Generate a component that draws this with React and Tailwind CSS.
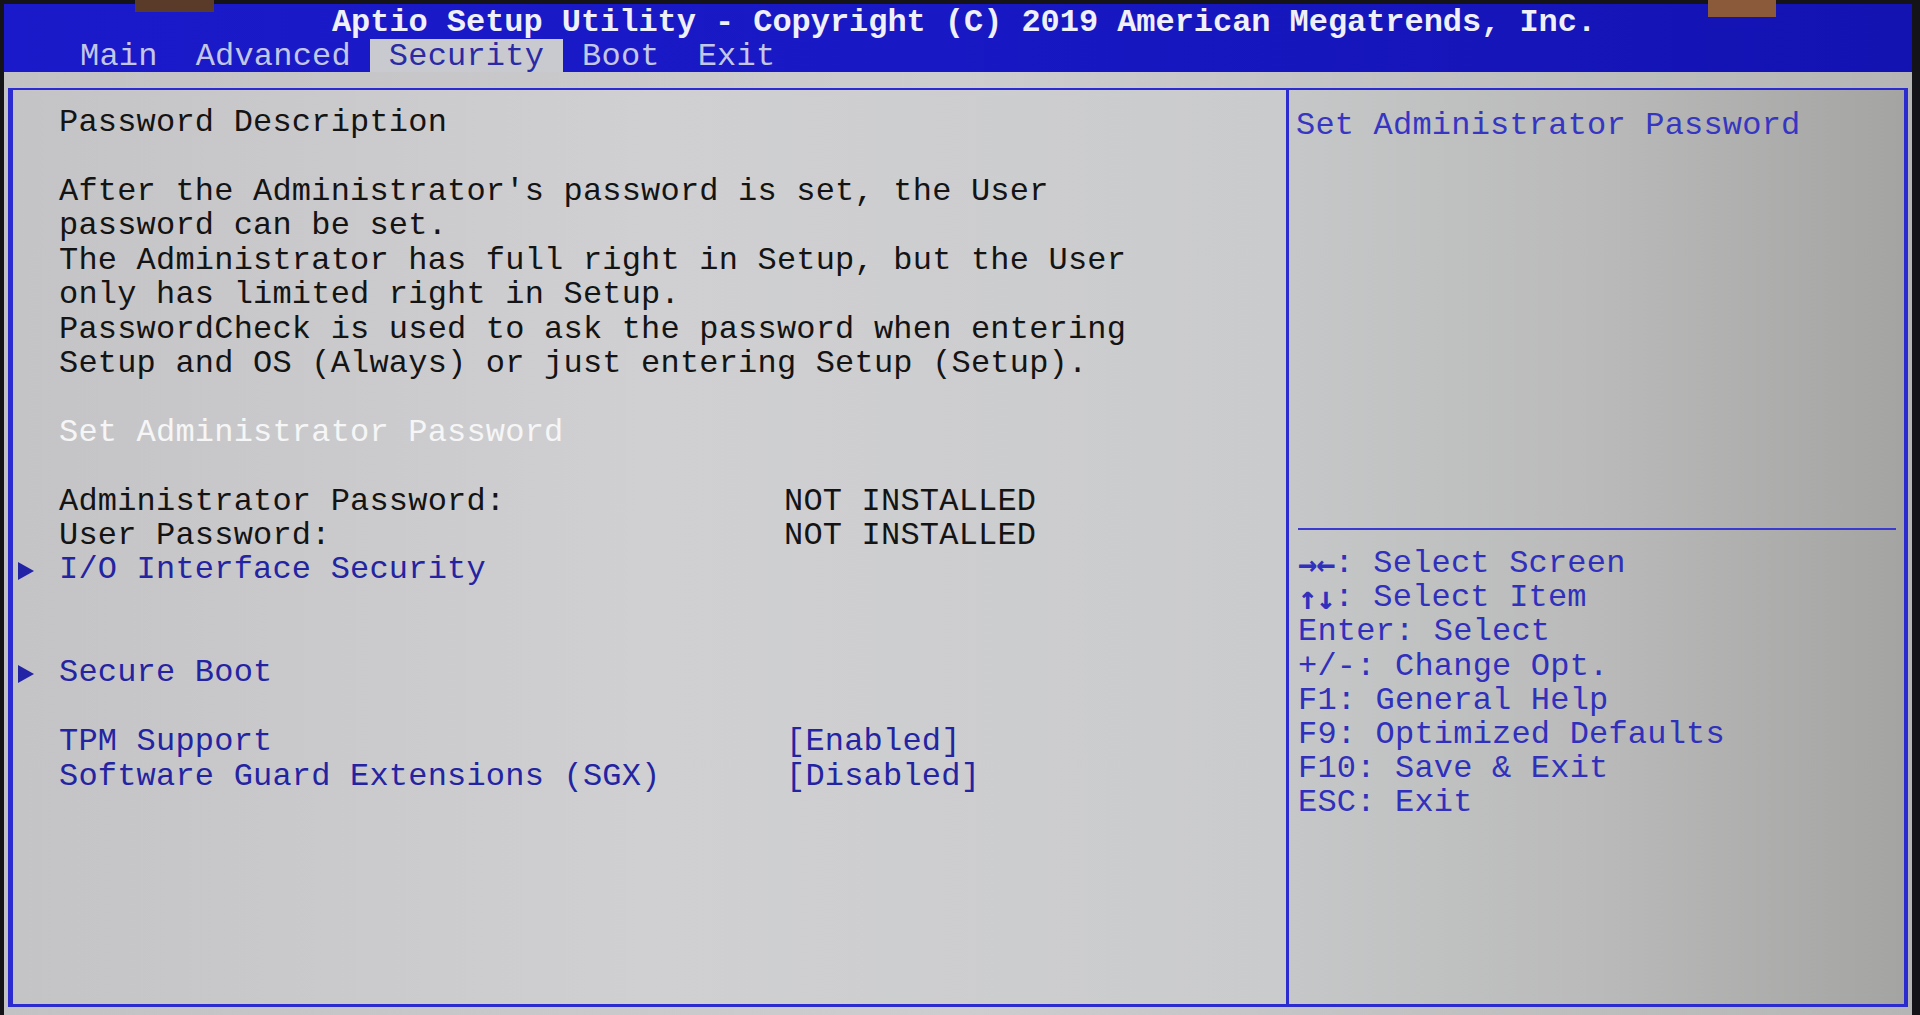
import React from "react";

const FONT = { fontFamily: '"Liberation Mono", "DejaVu Sans Mono", monospace' };

const tabs = ["Main", "Advanced", "Security", "Boot", "Exit"];

const descLines = [
  "After the Administrator's password is set, the User",
  "password can be set.",
  "The Administrator has full right in Setup, but the User",
  "only has limited right in Setup.",
  "PasswordCheck is used to ask the password when entering",
  "Setup and OS (Always) or just entering Setup (Setup).",
];

const helpLines = [
  ["→←", ": Select Screen"],
  ["↑↓", ": Select Item"],
  ["", "Enter: Select"],
  ["", "+/-: Change Opt."],
  ["", "F1: General Help"],
  ["", "F9: Optimized Defaults"],
  ["", "F10: Save & Exit"],
  ["", "ESC: Exit"],
];

const Arrow = () => (
  <svg width="18" height="20" viewBox="0 0 18 20" className="shrink-0">
    <polygon points="1,1 17,10 1,19" fill="#2323a6" />
  </svg>
);

const Row = ({ children, className = "" }) => (
  <div className={`h-[34.4px] flex items-center whitespace-pre ${className}`}>{children}</div>
);

const Blank = () => <div className="h-[34.4px]" />;

const SubMenu = ({ label }) => (
  <Row className="relative text-[#2424a2]">
    <span className="absolute left-[-42px] top-[8px]">
      <Arrow />
    </span>
    {label}
  </Row>
);

const Setting = ({ label, value, labelColor, valueColor, offset = "" }) => (
  <Row>
    <span className={`w-[725px] ${labelColor}`}>{label}</span>
    <span className={`${valueColor} ${offset}`}>{value}</span>
  </Row>
);

export default function App() {
  return (
    <div
      className="relative w-[1920px] h-[1015px] overflow-hidden bg-[#141418] text-[32px] tracking-[0.2px]"
      style={FONT}
    >
      {/* bits of the monitor bezel caught in the photo */}
      <div className="absolute left-[135px] top-0 w-[79px] h-[12px] bg-[#5a3a28] z-10" />
      <div className="absolute left-[1708px] top-0 w-[68px] h-[17px] bg-[#8a5a3a] z-10" />

      <div className="ml-[4px] mr-[8px] mt-[4px] h-[1011px] flex flex-col">
        {/* header */}
        <div className="h-[68px] bg-linear-to-r from-[#1a1aca] via-[#1818c4] to-[#1313b2] flex flex-col">
          <div className="h-[35px] pt-[3px] pl-[12px] flex items-center justify-center text-[#f0f0f8] font-bold tracking-[-0.05px]">
            Aptio Setup Utility - Copyright (C) 2019 American Megatrends, Inc.
          </div>
          <div className="h-[33px] flex items-stretch pl-[57px]">
            {tabs.map((t) => (
              <div
                key={t}
                className={`px-[19px] pt-[2px] flex items-center ${
                  t === "Security" ? "bg-[#c9cacf] text-[#2a2aa6]" : "text-[#c3c7e6]"
                }`}
              >
                {t}
              </div>
            ))}
          </div>
        </div>

        {/* body */}
        <div className="flex-1 flex flex-col bg-linear-to-r from-[#c2c2c5] via-[#cdcdd0] to-[#b4b5b4] pt-[16px] pl-[4px] pr-[4px] pb-[8px]">
          <div className="flex-1 flex border-t-2 border-b-[3px] border-l-[5px] border-r-4 border-[#2b2bd0]">
            {/* left panel */}
            <div className="w-[1273px] pl-[46px] pt-[16px] bg-linear-to-r from-[#c4c4c7] via-[#d0d0d3] to-[#cacbcd]">
              <Row className="text-[#141414]">Password Description</Row>
              <Blank />
              {descLines.map((l) => (
                <Row key={l} className="text-[#141414]">
                  {l}
                </Row>
              ))}
              <Blank />
              <Row className="text-[#f6f6f6]">Set Administrator Password</Row>
              <Blank />
              <Setting
                label="Administrator Password:"
                value="NOT INSTALLED"
                labelColor="text-[#141414]"
                valueColor="text-[#141414]"
              />
              <Setting
                label="User Password:"
                value="NOT INSTALLED"
                labelColor="text-[#141414]"
                valueColor="text-[#141414]"
              />
              <SubMenu label="I/O Interface Security" />
              <Blank />
              <Blank />
              <SubMenu label="Secure Boot" />
              <Blank />
              <Setting
                label="TPM Support"
                value="[Enabled]"
                labelColor="text-[#2424a2]"
                valueColor="text-[#2424a2]"
                offset="ml-[2px]"
              />
              <Setting
                label="Software Guard Extensions (SGX)"
                value="[Disabled]"
                labelColor="text-[#2424a2]"
                valueColor="text-[#2424a2]"
                offset="ml-[2px]"
              />
            </div>

            {/* right panel */}
            <div className="flex-1 flex flex-col border-l-[3px] border-[#2b2bd0] bg-linear-to-r from-[#c6c7c8] via-[#b9bab9] to-[#a4a5a3]">
              <div className="h-[438px] pl-[7px] pt-[19px]">
                <Row className="text-[#3636c2]">Set Administrator Password</Row>
              </div>
              <div className="h-[2px] ml-[9px] mr-[8px] bg-[#3a3ad0]" />
              <div className="pl-[9px] pt-[17px]">
                {helpLines.map(([keys, rest]) => (
                  <div
                    key={rest}
                    className="h-[34.2px] flex items-center whitespace-pre text-[#3030bc]"
                  >
                    {keys && (
                      <span
                        className="font-bold tracking-[-1px]"
                        style={{ fontFamily: '"DejaVu Sans Mono", monospace' }}
                      >
                        {keys}
                      </span>
                    )}
                    {rest}
                  </div>
                ))}
              </div>
            </div>
          </div>
        </div>
      </div>
    </div>
  );
}
